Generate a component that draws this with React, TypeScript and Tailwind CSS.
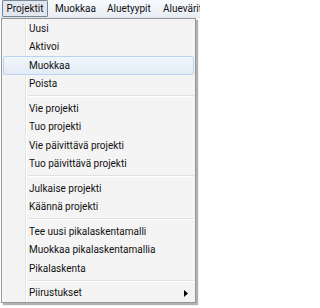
const groups: string[][] = [
  ["Uusi", "Aktivoi", "Muokkaa", "Poista"],
  ["Vie projekti", "Tuo projekti", "Vie päivittävä projekti", "Tuo päivittävä projekti"],
  ["Julkaise projekti", "Käännä projekti"],
  ["Tee uusi pikalaskentamalli", "Muokkaa pikalaskentamallia", "Pikalaskenta"],
  ["Piirustukset"],
];

function MenuItem({ label, active, submenu }: { label: string; active?: boolean; submenu?: boolean }) {
  return (
    <div className="relative h-[18.5px] flex items-center pl-[27px] pr-2">
      {active && (
        <div className="absolute inset-y-0 left-[1px] right-[1px] rounded-[2px] border border-[#b9d3f0] bg-gradient-to-b from-[#f0f5fb] to-[#e3ecf7]" />
      )}
      <span className="relative">{label}</span>
      {submenu && (
        <svg className="absolute right-[7px] top-[6px]" width="4" height="7" viewBox="0 0 4 7">
          <path d="M0 0 L4 3.5 L0 7 Z" fill="#000" />
        </svg>
      )}
    </div>
  );
}

export default function App() {
  return (
    <div
      className="w-[200px] h-[308px] bg-white text-[10px] text-[#111] overflow-hidden"
      style={{ fontFamily: 'Roboto, "Noto Sans", sans-serif' }}
    >
      <div className="h-[18px] flex items-center pl-[2px] whitespace-nowrap bg-gradient-to-b from-[#f7f9fc] to-[#e9eef5] border-b border-[#e0e5ec]">
        <div className="shrink-0 w-[46px] h-[17px] flex items-center justify-center border border-[#7a8797] bg-[#e1e7ef] rounded-[1px]">
          Projektit
        </div>
        <div className="shrink-0 w-[59px] pl-[7px]">Muokkaa</div>
        <div className="shrink-0 w-[56px]">Aluetyypit</div>
        <div className="shrink-0">Aluevärit</div>
      </div>
      <div className="ml-[1px] w-[195px] border border-[#979797] bg-[#f4f4f4] shadow-[2px_2px_1px_rgba(0,0,0,0.3)] relative">
        <div className="absolute top-0 bottom-0 left-[23px] w-[1px] bg-[#e2e3e3]" />
        <div className="absolute top-0 bottom-0 left-[24px] w-[1px] bg-white" />
        {groups.map((g, gi) => (
          <div key={gi}>
            {gi > 0 && (
              <div className="h-[6px] flex flex-col justify-center pl-[26px] pr-[1px]">
                <div className="h-[1px] bg-[#e0e0e0]" />
                <div className="h-[1px] bg-white" />
              </div>
            )}
            {g.map((label) => (
              <MenuItem
                key={label}
                label={label}
                active={label === "Muokkaa"}
                submenu={label === "Piirustukset"}
              />
            ))}
          </div>
        ))}
      </div>
    </div>
  );
}
